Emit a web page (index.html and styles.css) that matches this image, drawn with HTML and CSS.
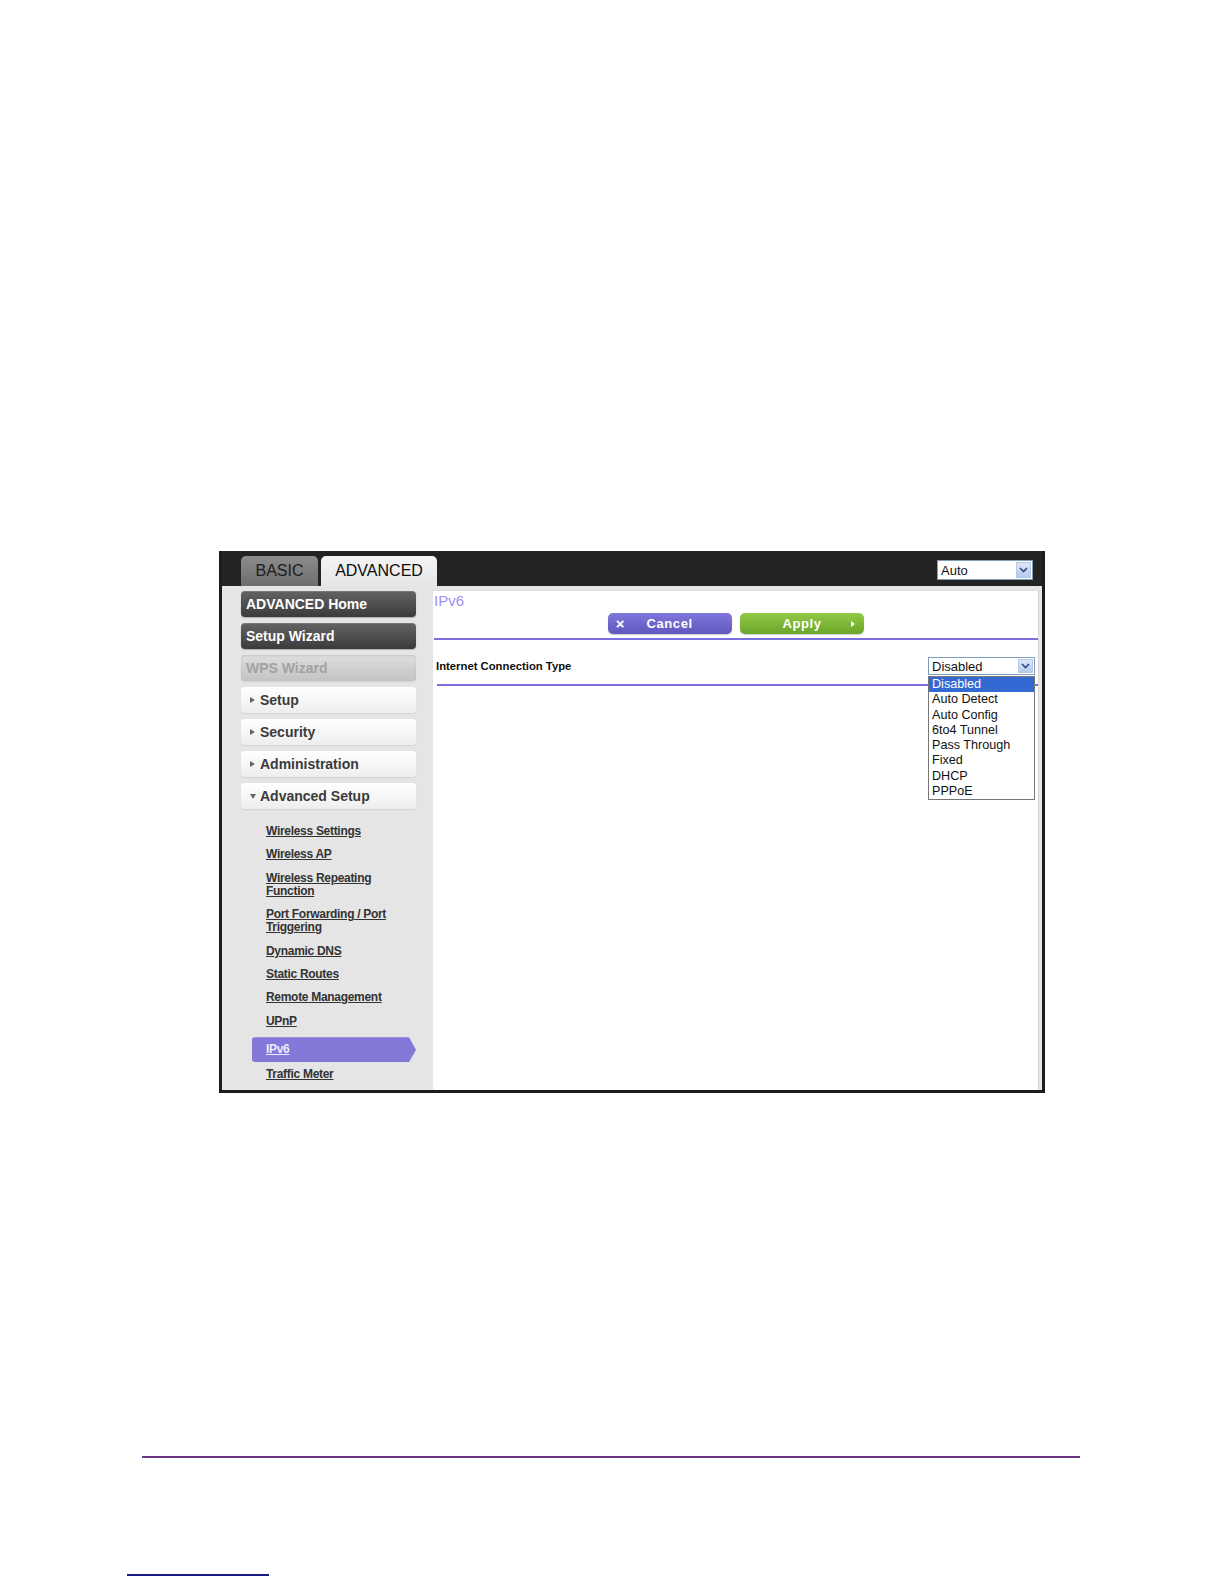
FILE: index.html
```html
<!DOCTYPE html>
<html lang="en">
<head>
<meta charset="utf-8">
<title>IPv6 - ADVANCED</title>
<link rel="stylesheet" href="styles.css">
</head>
<body>
<div class="frame-wrap">
  <div class="frame">
    <div class="topbar">
      <div class="tab tab-basic">BASIC</div>
      <div class="tab tab-advanced">ADVANCED</div>
      <div class="select select-auto">
        <span class="select-text">Auto</span>
        <span class="select-arrow"><svg width="9" height="6" viewBox="0 0 9 6"><path d="M1 1 L4.5 4.5 L8 1" fill="none" stroke="#2b4a8f" stroke-width="1.6"/></svg></span>
      </div>
    </div>
    <div class="main">
      <nav class="sidebar">
        <div class="nav-btn nav-dark">ADVANCED Home</div>
        <div class="nav-btn nav-dark">Setup Wizard</div>
        <div class="nav-btn nav-disabled">WPS Wizard</div>
        <div class="nav-btn nav-light"><span class="tri-right"></span>Setup</div>
        <div class="nav-btn nav-light"><span class="tri-right"></span>Security</div>
        <div class="nav-btn nav-light"><span class="tri-right"></span>Administration</div>
        <div class="nav-btn nav-light"><span class="tri-down"></span>Advanced Setup</div>
        <ul class="links">
          <li><a href="#">Wireless Settings</a></li>
          <li><a href="#">Wireless AP</a></li>
          <li><a href="#">Wireless Repeating<br>Function</a></li>
          <li><a href="#">Port Forwarding / Port<br>Triggering</a></li>
          <li><a href="#">Dynamic DNS</a></li>
          <li><a href="#">Static Routes</a></li>
          <li><a href="#">Remote Management</a></li>
          <li><a href="#">UPnP</a></li>
          <li class="active"><a href="#">IPv6</a></li>
          <li><a href="#">Traffic Meter</a></li>
        </ul>
      </nav>
      <section class="content">
        <div class="title">IPv6</div>
        <div class="actions">
          <button class="btn btn-cancel"><span class="btn-x">&#215;</span><span class="btn-label">Cancel</span></button>
          <button class="btn btn-apply"><span class="btn-label">Apply</span><span class="btn-arrow"></span></button>
        </div>
        <div class="rule"></div>
        <div class="row">
          <span class="row-label">Internet Connection Type</span>
          <div class="select-wrap">
            <div class="select select-type">
              <span class="select-text">Disabled</span>
              <span class="select-arrow"><svg width="9" height="6" viewBox="0 0 9 6"><path d="M1 1 L4.5 4.5 L8 1" fill="none" stroke="#2b4a8f" stroke-width="1.6"/></svg></span>
            </div>
            <ul class="dropdown">
              <li class="selected">Disabled</li>
              <li>Auto Detect</li>
              <li>Auto Config</li>
              <li>6to4 Tunnel</li>
              <li>Pass Through</li>
              <li>Fixed</li>
              <li>DHCP</li>
              <li>PPPoE</li>
            </ul>
          </div>
        </div>
        <div class="rule rule2"></div>
      </section>
    </div>
  </div>
</div>
<div class="footer-rule"></div>
<div class="footnote-rule"></div>
</body>
</html>
```

FILE: styles.css
```css
* { box-sizing: border-box; }

body {
  margin: 0;
  background: #ffffff;
  font-family: "Liberation Sans", Arial, sans-serif;
  color: #111;
}

.frame-wrap {
  padding: 551px 0 0 219px;
}

.frame {
  width: 826px;
  height: 542px;
  border: 3px solid #1c1c1c;
  border-top: 0;
  background: #e5e5e5;
  display: flex;
  flex-direction: column;
}

/* ---------- top bar ---------- */
.topbar {
  height: 35px;
  background: #232323;
  display: flex;
  align-items: flex-end;
  padding-left: 19px;
  flex-shrink: 0;
}

.tab {
  height: 30px;
  border-radius: 5px 5px 0 0;
  display: flex;
  align-items: center;
  justify-content: center;
  font-size: 16px;
  line-height: 1;
}

.tab-basic {
  width: 77px;
  margin-right: 3px;
  background: linear-gradient(#8c8c8c, #6d6d6d);
  color: #1c1c1c;
}

.tab-advanced {
  width: 116px;
  background: linear-gradient(#f4f4f4, #e6e6e6);
  color: #0c0c0c;
}

.select {
  display: flex;
  align-items: stretch;
  background: #fff;
  border: 1px solid #7f9db9;
  font-size: 13px;
  color: #111;
}

.select-text {
  flex: 1;
  padding-left: 3px;
  display: flex;
  align-items: center;
}

.select-arrow {
  width: 15px;
  margin: 1px;
  background: linear-gradient(#dce6f7, #b9cbeb);
  border: 1px solid #b7c8e6;
  display: flex;
  align-items: center;
  justify-content: center;
}

.select-auto {
  width: 96px;
  height: 20px;
  margin-left: auto;
  margin-right: 9px;
  align-self: flex-start;
  margin-top: 9px;
}

/* ---------- main ---------- */
.main {
  flex: 1;
  display: flex;
  min-height: 0;
}

.sidebar {
  width: 211px;
  flex-shrink: 0;
  padding: 5px 0 0 19px;
}

.nav-btn {
  width: 175px;
  height: 26px;
  border-radius: 4px;
  margin-bottom: 6px;
  display: flex;
  align-items: center;
  font-size: 14px;
  font-weight: bold;
  padding-left: 5px;
}

.nav-dark {
  background: linear-gradient(#636363, #3b3b3b);
  color: #fff;
  box-shadow: inset 0 1px 0 rgba(255,255,255,0.15), 0 1px 1px rgba(0,0,0,0.25);
}

.nav-disabled {
  background: linear-gradient(#dedede, #c3c3c3);
  color: #a2a2a2;
  box-shadow: inset 0 1px 2px rgba(0,0,0,0.12), 0 1px 1px rgba(0,0,0,0.1);
}

.nav-light {
  background: linear-gradient(#ffffff, #eeeeee);
  color: #3b3b3b;
  padding-left: 9px;
  box-shadow: 0 1px 1px rgba(0,0,0,0.08);
}

.tri-right {
  width: 0;
  height: 0;
  border-left: 5px solid #666;
  border-top: 3.5px solid transparent;
  border-bottom: 3.5px solid transparent;
  margin-right: 5px;
}

.tri-down {
  width: 0;
  height: 0;
  border-top: 5px solid #666;
  border-left: 3.5px solid transparent;
  border-right: 3.5px solid transparent;
  margin-right: 4px;
}

.links {
  list-style: none;
  margin: 0;
  padding: 10px 0 0 25px;
}

.links li {
  font-size: 12px;
  font-weight: bold;
  line-height: 13px;
  margin-bottom: 10.4px;
  letter-spacing: -0.3px;
}

.links a {
  color: #333;
  text-decoration: underline;
}

.links li.active {
  margin-left: -14px;
  padding-left: 14px;
  width: 164px;
  height: 25px;
  display: flex;
  align-items: center;
  background: #8279d9;
  border-radius: 3px 0 0 3px;
  clip-path: polygon(0 0, calc(100% - 7px) 0, 100% 50%, calc(100% - 7px) 100%, 0 100%);
  margin-bottom: 6px;
  margin-top: -1px;
}

.links li.active a {
  color: #ecebff;
}

/* ---------- content ---------- */
.content {
  flex: 1;
  background: #fff;
  margin: 4px 3px 0 0;
  border-top: 1px solid #dcdcdc;
  border-right: 1px solid #d6d6d6;
  position: relative;
}

.title {
  font-size: 15px;
  line-height: 18px;
  color: #9c91ef;
  padding-left: 1px;
  margin-top: 1px;
}

.actions {
  display: flex;
  justify-content: center;
  gap: 8px;
  margin-top: 3px;
}

.btn {
  width: 124px;
  height: 21px;
  border: 0;
  border-radius: 5px;
  font-family: "Liberation Sans", Arial, sans-serif;
  font-size: 13px;
  font-weight: bold;
  letter-spacing: 0.6px;
  color: #fff;
  display: flex;
  align-items: center;
  padding: 0;
  position: relative;
}

.btn-cancel {
  background: linear-gradient(#7f77da, #5f57bd);
  box-shadow: 0 1px 1px rgba(0,0,0,0.2);
}

.btn-apply {
  background: linear-gradient(#93c946, #6aa62b);
  box-shadow: 0 1px 1px rgba(0,0,0,0.2);
}

.btn-x {
  font-size: 15px;
  margin-left: 7px;
  width: 12px;
  text-align: center;
}

.btn-cancel .btn-label {
  margin-left: 20px;
}

.btn-apply .btn-label {
  margin-left: 43px;
}

.btn-arrow {
  width: 0;
  height: 0;
  border-left: 4px solid #fff;
  border-top: 3px solid transparent;
  border-bottom: 3px solid transparent;
  margin-left: auto;
  margin-right: 9px;
}

.rule {
  height: 2px;
  background: #7b6fe0;
  margin: 4px 0 0 1px;
}

.row {
  height: 44px;
  padding: 8px 3px 0 3px;
  display: flex;
  align-items: center;
  justify-content: space-between;
}

.row-label {
  font-size: 11.3px;
  font-weight: bold;
  color: #111;
}

.select-wrap {
  position: relative;
}

.select-type {
  width: 107px;
  height: 18px;
}

.dropdown {
  position: absolute;
  top: 19px;
  left: 0;
  width: 107px;
  margin: 0;
  padding: 0;
  list-style: none;
  background: #fff;
  border: 1px solid #777;
  z-index: 2;
}

.dropdown li {
  font-size: 12.6px;
  height: 15.3px;
  line-height: 15.3px;
  padding-left: 3px;
  color: #111;
}

.dropdown li.selected {
  background: #3468d2;
  color: #fff;
}

.rule2 {
  margin: 0 0 0 4px;
}

/* ---------- page footer rules ---------- */
.footer-rule {
  margin: 363px 0 0 142px;
  width: 938px;
  height: 2px;
  background: #6c3482;
}

.footnote-rule {
  margin: 116px 0 0 127px;
  width: 142px;
  height: 2px;
  background: #1c1c80;
}
```
